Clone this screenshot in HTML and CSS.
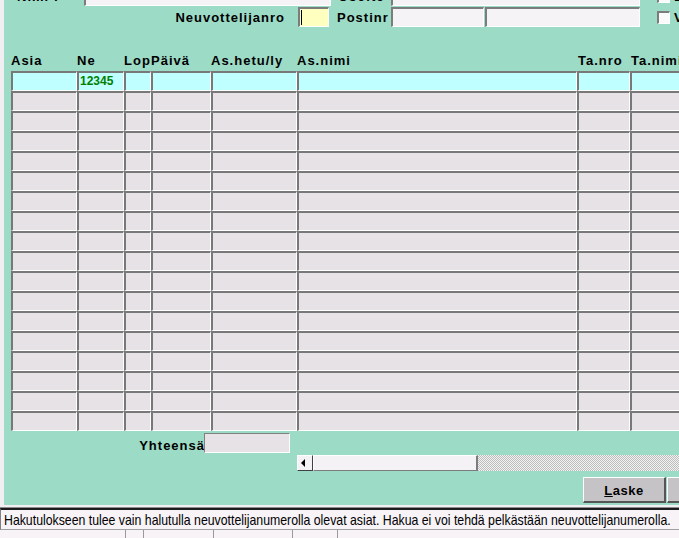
FILE: index.html
```html
<!DOCTYPE html>
<html>
<head>
<meta charset="utf-8">
<link rel="stylesheet" href="styles.css">
</head>
<body>
<div class="panel">
  <div class="form">
    <div class="frow">
      <span class="lbl l-nimi">Nimi :</span>
      <span class="fld f-nimi"></span>
      <span class="lbl l-os">Osoite</span>
      <span class="fld f-os"></span>
      <span class="chk"></span>
      <span class="lbl l-chk">L</span>
    </div>
    <div class="frow">
      <span class="lbl l-neuv">Neuvottelijanro</span>
      <span class="fld f-neuv"><span class="caret"></span></span>
      <span class="lbl l-post">Postinr</span>
      <span class="fld f-post"></span>
      <span class="fld f-ptp"></span>
      <span class="chk"></span>
      <span class="lbl l-chk">V</span>
    </div>
  </div>

  <div class="grid">
    <div class="hrow">
      <span class="lbl">Asia</span><span class="lbl">Ne</span><span class="lbl">Lop</span><span class="lbl">Päivä</span><span class="lbl">As.hetu/ly</span><span class="lbl">As.nimi</span><span class="lbl h-ta">Ta.nro</span><span class="lbl h-ta">Ta.nimi</span>
    </div>
    <div class="row sel"><span class="c"></span><span class="c num">12345</span><span class="c"></span><span class="c"></span><span class="c"></span><span class="c"></span><span class="c"></span><span class="c"></span></div>
    <div class="row"><span class="c"></span><span class="c"></span><span class="c"></span><span class="c"></span><span class="c"></span><span class="c"></span><span class="c"></span><span class="c"></span></div>
    <div class="row"><span class="c"></span><span class="c"></span><span class="c"></span><span class="c"></span><span class="c"></span><span class="c"></span><span class="c"></span><span class="c"></span></div>
    <div class="row"><span class="c"></span><span class="c"></span><span class="c"></span><span class="c"></span><span class="c"></span><span class="c"></span><span class="c"></span><span class="c"></span></div>
    <div class="row"><span class="c"></span><span class="c"></span><span class="c"></span><span class="c"></span><span class="c"></span><span class="c"></span><span class="c"></span><span class="c"></span></div>
    <div class="row"><span class="c"></span><span class="c"></span><span class="c"></span><span class="c"></span><span class="c"></span><span class="c"></span><span class="c"></span><span class="c"></span></div>
    <div class="row"><span class="c"></span><span class="c"></span><span class="c"></span><span class="c"></span><span class="c"></span><span class="c"></span><span class="c"></span><span class="c"></span></div>
    <div class="row"><span class="c"></span><span class="c"></span><span class="c"></span><span class="c"></span><span class="c"></span><span class="c"></span><span class="c"></span><span class="c"></span></div>
    <div class="row"><span class="c"></span><span class="c"></span><span class="c"></span><span class="c"></span><span class="c"></span><span class="c"></span><span class="c"></span><span class="c"></span></div>
    <div class="row"><span class="c"></span><span class="c"></span><span class="c"></span><span class="c"></span><span class="c"></span><span class="c"></span><span class="c"></span><span class="c"></span></div>
    <div class="row"><span class="c"></span><span class="c"></span><span class="c"></span><span class="c"></span><span class="c"></span><span class="c"></span><span class="c"></span><span class="c"></span></div>
    <div class="row"><span class="c"></span><span class="c"></span><span class="c"></span><span class="c"></span><span class="c"></span><span class="c"></span><span class="c"></span><span class="c"></span></div>
    <div class="row"><span class="c"></span><span class="c"></span><span class="c"></span><span class="c"></span><span class="c"></span><span class="c"></span><span class="c"></span><span class="c"></span></div>
    <div class="row"><span class="c"></span><span class="c"></span><span class="c"></span><span class="c"></span><span class="c"></span><span class="c"></span><span class="c"></span><span class="c"></span></div>
    <div class="row"><span class="c"></span><span class="c"></span><span class="c"></span><span class="c"></span><span class="c"></span><span class="c"></span><span class="c"></span><span class="c"></span></div>
    <div class="row"><span class="c"></span><span class="c"></span><span class="c"></span><span class="c"></span><span class="c"></span><span class="c"></span><span class="c"></span><span class="c"></span></div>
    <div class="row"><span class="c"></span><span class="c"></span><span class="c"></span><span class="c"></span><span class="c"></span><span class="c"></span><span class="c"></span><span class="c"></span></div>
    <div class="row"><span class="c"></span><span class="c"></span><span class="c"></span><span class="c"></span><span class="c"></span><span class="c"></span><span class="c"></span><span class="c"></span></div>
  </div>

  <div class="total">
    <span class="lbl l-tot">Yhteensä</span>
    <span class="totfld"></span>
  </div>

  <div class="hscroll">
    <span class="sarrow"><svg width="6" height="8" viewBox="0 0 6 8"><path d="M4 0 L0 4 L4 8 Z" fill="#000"/></svg></span>
    <span class="sthumb"></span>
    <span class="strack"></span>
  </div>

  <div class="buttons">
    <span class="btn"><u>L</u>aske</span>
    <span class="btn btn2"></span>
  </div>
</div>

<div class="status">
  <div class="msg"><span class="msgtext">Hakutulokseen tulee vain halutulla neuvottelijanumerolla olevat asiat. Hakua ei voi tehdä pelkästään neuvottelijanumerolla.</span></div>
  <div class="panes">
    <span class="pane p1"></span><span class="pane p2"></span><span class="pane p3"></span><span class="pane p4"></span><span class="pane p5"></span><span class="pane p6"></span>
  </div>
</div>
</body>
</html>
```
FILE: styles.css
```css
* { box-sizing: border-box; }
html, body { margin: 0; height: 100%; overflow: hidden; }
body {
  background: #f2eff2;
  font-family: "Liberation Sans", Arial, sans-serif;
  color: #000;
}

.panel {
  margin-left: 4px;
  height: 505px;
  background: #9cdbc6;
  overflow: hidden;
}

.lbl {
  font-weight: bold;
  font-size: 13px;
  letter-spacing: 1px;
  line-height: 15px;
  white-space: nowrap;
  flex-shrink: 0;
}

/* top form */
.form {
  margin-top: -14px;
  display: flex;
  flex-direction: column;
  gap: 1px;
}
.frow {
  display: flex;
  align-items: center;
  height: 20px;
}
.fld {
  display: block;
  flex-shrink: 0;
  height: 20px;
  background: #f5f3f5;
  border-top: 2px solid #7c7c7c;
  border-left: 2px solid #7c7c7c;
  border-bottom: 1px solid #fff;
  border-right: 1px solid #fff;
}
.l-nimi { width: 80px; padding-left: 13px; }
.f-nimi { width: 247px; }
.l-os { width: 60px; padding-left: 7px; }
.f-os { width: 249px; }
.l-neuv { width: 294px; text-align: right; padding-right: 13px; }
.f-neuv { width: 31px; background: #ffffc0; padding: 1px 0 0 1px; }
.caret { display: block; width: 1px; height: 15px; background: #000; }
.l-post { width: 62px; padding-left: 8px; }
.f-post { width: 93px; }
.f-ptp { width: 155px; margin-left: 1px; }
.chk {
  display: block;
  flex-shrink: 0;
  width: 13px;
  height: 13px;
  margin-left: 17px;
  background: #fafafa;
  border-top: 2px solid #7c7c7c;
  border-left: 2px solid #7c7c7c;
  border-bottom: 1px solid #fff;
  border-right: 1px solid #fff;
}
.l-chk { padding-left: 4px; }

/* grid */
.grid { margin: 26px 0 0 7px; }
.hrow, .row {
  display: grid;
  grid-template-columns: 66px 47px 27px 60px 86px 280px 53px 100px;
}
.hrow { height: 18px; }
.h-ta { padding-left: 1px; }
.row { height: 20px; }
.c {
  display: block;
  height: 20px;
  background: #e6e2e6;
  border-top: 2px solid #787878;
  border-left: 2px solid #787878;
  border-bottom: 1px solid #fff;
  border-right: 1px solid #fff;
}
.sel .c { background: #c0ffff; }
.num {
  color: #008000;
  font-weight: bold;
  font-size: 12px;
  line-height: 16px;
  padding-left: 1px;
}

/* total */
.total {
  display: flex;
  align-items: flex-end;
  margin-top: 2px;
  height: 20px;
}
.l-tot { width: 201px; text-align: right; margin-right: -1px; line-height: 14px; }
.totfld {
  display: block;
  flex-shrink: 0;
  width: 86px;
  height: 20px;
  background: #e6e2e6;
  border-top: 1px solid #808080;
  border-left: 1px solid #808080;
  border-bottom: 1px solid #fff;
  border-right: 1px solid #fff;
}

/* horizontal scroll bar */
.hscroll {
  display: flex;
  margin: 2px 0 0 293px;
  height: 16px;
}
.sarrow {
  display: flex;
  flex-shrink: 0;
  align-items: center;
  justify-content: center;
  width: 16px;
  height: 16px;
  background: #f5f2f5;
  border-top: 1px solid #fff;
  border-left: 1px solid #fff;
  border-right: 1px solid #404040;
  border-bottom: 1px solid #404040;
  padding-right: 2px;
}
.sthumb {
  display: block;
  flex-shrink: 0;
  width: 165px;
  height: 16px;
  background: #f5f2f5;
  border-top: 1px solid #fff;
  border-left: 1px solid #fff;
  border-right: 2px solid #7c7c7c;
  border-bottom: 1px solid #7c7c7c;
}
.strack {
  flex: 1;
  display: block;
  height: 16px;
  background: repeating-conic-gradient(#bdbdbd 0 25%, #f2f2f2 0 50%) 0 0 / 2px 2px;
}

/* buttons */
.buttons {
  display: flex;
  gap: 1px;
  margin: 6px 0 0 579px;
}
.btn {
  display: flex;
  flex-shrink: 0;
  align-items: center;
  justify-content: center;
  width: 83px;
  height: 26px;
  background: #c6c3c6;
  border-top: 1px solid #fff;
  border-left: 1px solid #fff;
  border-right: 2px solid #555;
  border-bottom: 2px solid #555;
  font-weight: bold;
  font-size: 13px;
  letter-spacing: 0.5px;
  padding-top: 1px;
}
.btn2 { width: 40px; }

/* status bar */
.status {
  margin-top: 2px;
  border-top: 1px solid #8c8c8c;
}
.msg {
  height: 22px;
  border-top: 2px solid #1c1c1c;
  border-left: 1px solid #808080;
  border-bottom: 1px solid #a0a0a0;
  background: #f7f3f7;
  padding-left: 3px;
  font-size: 15px;
  line-height: 19px;
  white-space: nowrap;
}
.msgtext {
  display: inline-block;
  transform: scaleX(0.82);
  transform-origin: 0 50%;
}
.panes {
  display: flex;
  height: 8px;
  background: #f7f3f7;
}
.pane { display: block; flex-shrink: 0; height: 8px; border-right: 1px solid #9a9a9a; }
.p1 { width: 126px; }
.p2 { width: 18px; }
.p3 { width: 70px; }
.p4 { width: 79px; }
.p5 { width: 45px; }
.p6 { flex: 1; border-right: 0; }
```
